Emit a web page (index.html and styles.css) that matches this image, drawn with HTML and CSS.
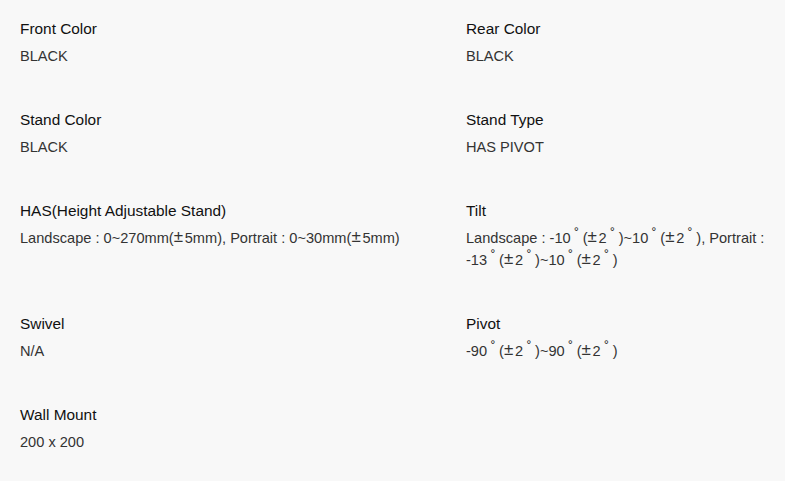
FILE: index.html
```html
<!DOCTYPE html>
<html lang="en">
<head>
    <meta charset="UTF-8">
    <meta name="viewport" content="width=device-width, initial-scale=1.0">
    <title>Specifications</title>
    <link rel="stylesheet" href="styles.css">
</head>
<body>
    <div class="spec-list">
        <div class="spec-item">
            <div class="spec-title">Front Color</div>
            <div class="spec-value">BLACK</div>
        </div>
        <div class="spec-item">
            <div class="spec-title">Rear Color</div>
            <div class="spec-value">BLACK</div>
        </div>

        <div class="spec-item">
            <div class="spec-title">Stand Color</div>
            <div class="spec-value">BLACK</div>
        </div>
        <div class="spec-item">
            <div class="spec-title">Stand Type</div>
            <div class="spec-value">HAS PIVOT</div>
        </div>

        <div class="spec-item">
            <div class="spec-title">HAS(Height Adjustable Stand)</div>
            <div class="spec-value">Landscape : 0~270mm(<span class="sym">±</span>5mm), Portrait : 0~30mm(<span class="sym">±</span>5mm)</div>
        </div>
        <div class="spec-item">
            <div class="spec-title">Tilt</div>
            <div class="spec-value">Landscape : -10<span class="deg">˚</span>(<span class="sym">±</span>2<span class="deg">˚</span>)~10<span class="deg">˚</span>(<span class="sym">±</span>2<span class="deg">˚</span>), Portrait : -13<span class="deg">˚</span>(<span class="sym">±</span>2<span class="deg">˚</span>)~10<span class="deg">˚</span>(<span class="sym">±</span>2<span class="deg">˚</span>)</div>
        </div>

        <div class="spec-item">
            <div class="spec-title">Swivel</div>
            <div class="spec-value">N/A</div>
        </div>
        <div class="spec-item">
            <div class="spec-title">Pivot</div>
            <div class="spec-value">-90<span class="deg">˚</span>(<span class="sym">±</span>2<span class="deg">˚</span>)~90<span class="deg">˚</span>(<span class="sym">±</span>2<span class="deg">˚</span>)</div>
        </div>

        <div class="spec-item">
            <div class="spec-title">Wall Mount</div>
            <div class="spec-value">200 x 200</div>
        </div>
    </div>
</body>
</html>
```

FILE: styles.css
```css
body {
    margin: 0;
    padding: 19px 20px 0;
    font-family: "Liberation Sans", Arial, sans-serif;
    background-color: #f8f8f8;
}

.spec-list {
    display: grid;
    grid-template-columns: 426px 1fr;
    column-gap: 20px;
    row-gap: 43px;
}

.spec-title {
    font-size: 15.4px;
    line-height: 20px;
    color: #111;
    margin-bottom: 6px;
}

.spec-value {
    font-size: 14.6px;
    line-height: 22px;
    color: #333;
}

/* plus-minus and degree marks are set wider, like a CJK fallback font */
.sym {
    display: inline-block;
    width: 11px;
    font-size: 17px;
    line-height: 1;
    position: relative;
    top: -1px;
}

.deg {
    display: inline-block;
    width: 12px;
    line-height: 1;
    text-align: center;
    position: relative;
    top: -4px;
}
```
